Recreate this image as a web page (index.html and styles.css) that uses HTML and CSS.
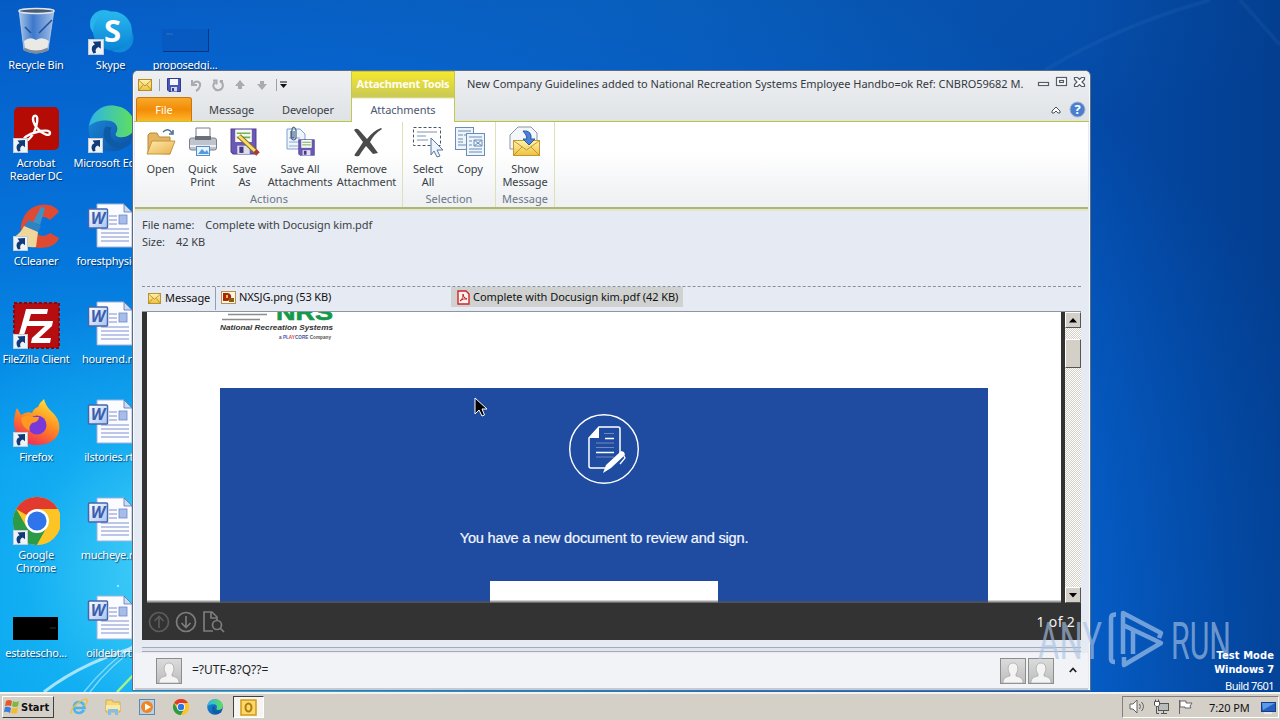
FILE: index.html
```html
<!DOCTYPE html>
<html lang="en">
<head>
<meta charset="utf-8">
<title>Desktop</title>
<link rel="stylesheet" href="styles.css">
</head>
<body>
<svg class="defs" width="0" height="0">
  <defs>
    <linearGradient id="gFolder" x1="0" y1="0" x2="1" y2="1"><stop offset="0" stop-color="#fdebae"/><stop offset="1" stop-color="#e9b14c"/></linearGradient>
    <linearGradient id="gMail" x1="0" y1="0" x2="0" y2="1"><stop offset="0" stop-color="#fff2b0"/><stop offset="1" stop-color="#edc23c"/></linearGradient>
    <linearGradient id="gSky" x1="0" y1="0" x2="0" y2="1"><stop offset="0" stop-color="#29b8ee"/><stop offset="1" stop-color="#0a84d6"/></linearGradient>
    <linearGradient id="gEdge" x1="0" y1="0" x2="1" y2="0"><stop offset="0" stop-color="#2db4e8"/><stop offset="1" stop-color="#5fe05a"/></linearGradient>
    <linearGradient id="gEdge2" x1="0" y1="0" x2="1" y2="1"><stop offset="0" stop-color="#1c8fdc"/><stop offset="1" stop-color="#0c4da0"/></linearGradient>
    <linearGradient id="gFox" x1=".8" y1="0" x2=".3" y2="1"><stop offset="0" stop-color="#ffe83c"/><stop offset=".5" stop-color="#ff8a20"/><stop offset="1" stop-color="#f02858"/></linearGradient>
    <linearGradient id="gPerson" x1="0" y1="0" x2="0" y2="1"><stop offset="0" stop-color="#dcdcdc"/><stop offset="1" stop-color="#bdbdbd"/></linearGradient>
    <linearGradient id="gGlass" x1="0" y1="0" x2="1" y2="0"><stop offset="0" stop-color="#a9c4e6"/><stop offset=".4" stop-color="#3d78cc"/><stop offset="1" stop-color="#a4bfe4"/></linearGradient>
    <linearGradient id="gWord" x1="0" y1="0" x2="1" y2="1"><stop offset="0" stop-color="#fff"/><stop offset="1" stop-color="#a9c3ef"/></linearGradient>
  </defs>
  <symbol id="shortcut" viewBox="0 0 15 15"><rect x=".5" y=".5" width="14" height="14" fill="#eef3f8" stroke="#c3ccd6"/><path d="M5 13.500C2.500 9.500 3.500 6 6.500 5.200L4.500 2.500 12 2 12 9.200 9.800 7.500C7.500 8.500 6.500 10 7.500 13Z" fill="#123a78"/></symbol>
  <symbol id="worddoc" viewBox="0 0 48 48"><path d="M10 1h27l8 8v35H10z" fill="#fbfcff" stroke="#9fb2da"/><path d="M37 1v8h8z" fill="#cddaf2" stroke="#5673b4" stroke-width=".8"/><path d="M22 13h8M22 17h8M22 21h8M14 26h28M14 30h28M14 34h28M14 38h28" stroke="#8090d0"/><rect x="32" y="12" width="8" height="9" fill="#a5bde8" stroke="#7088c8" stroke-width=".8"/><rect x="1.500" y="6" width="19" height="19" rx="1" fill="url(#gWord)" stroke="#4467b0" stroke-width="1.500"/><text x="11" y="21" text-anchor="middle" class="word-letter">W</text></symbol>
  <symbol id="chrome" viewBox="0 0 48 48"><circle cx="24" cy="24" r="24" fill="#fcc425"/><path d="M24 24 3.200 12A24 24 0 0 1 44.800 12Z" fill="#e23a2e"/><path d="M3.200 12A24 24 0 0 0 24 48L34 30 24 24 13 29Z" fill="#2c9a46"/><path d="M24 12h20.800A24 24 0 0 1 24 48L34 30Z" fill="#fcc425"/><circle cx="24" cy="24" r="12" fill="#fff"/><circle cx="24" cy="24" r="9.600" fill="#2f74ea"/></symbol>
  <symbol id="edge" viewBox="0 0 48 48"><circle cx="24" cy="24" r="23.500" fill="url(#gEdge2)"/><path d="M1 22C3 8 13 .5 24 .5c13 0 23.500 9 23.500 20C47.500 29 41 33 34 33c-5 0-7-2-5-5 3-5-1-12-8-12C12 15 4 18 1 22Z" fill="url(#gEdge)"/><path d="M18 22c-6 10 2 22 14 22 7 0 12-4 13-7-13 6-26-1-21-14Z" fill="#0d5ba8"/></symbol>
  <symbol id="mail" viewBox="0 0 14 12"><rect x=".5" y=".5" width="13" height="11" fill="url(#gMail)" stroke="#b58d22"/><path d="M1 1.500 7 7l6-5.500M1 11l4-5M13 11 9 6" fill="none" stroke="#b58d22" stroke-width=".9"/></symbol>
  <symbol id="floppy" viewBox="0 0 26 26"><path d="M1 1h24v24H3l-2-2z" fill="#6a58b4" stroke="#4c3d92"/><rect x="5" y="1.500" width="16" height="12" fill="#f6f8f4"/><path d="M6.500 5h13M6.500 9h13" stroke="#6db352" stroke-width="1.500"/><rect x="7" y="17" width="12" height="8" fill="#dcdfe9"/><rect x="9" y="18" width="4" height="6" fill="#463986"/></symbol>
  <symbol id="person" viewBox="0 0 26 26"><rect x=".5" y=".5" width="25" height="25" fill="url(#gPerson)" stroke="#8d8d8d"/><path d="M3 25c0-5 3-6 7-7v-2C7 12 7.500 5 13 5s6 7 3 11v2c4 1 7 2 7 7Z" fill="#f4f4f4" stroke="#a5a5a5" stroke-width=".7"/></symbol>
</svg>

<main class="desktop">
  <svg class="wallpaper" width="1280" height="692" viewBox="0 0 1280 692">
    <path d="M44 692Q85 660 150 643" stroke="#d5f5ff" stroke-opacity=".75" stroke-width="3" fill="none"/>
    <path d="M84 692Q105 665 140 640M90 692Q110 665 140 645" stroke="#d5f5ff" stroke-opacity=".55" stroke-width="1.500" fill="none"/>
    <path d="M117 692 140 668" stroke="#a9f08a" stroke-width="2.500"/>
    <path d="M1045 70Q1120 25 1210 0M1240 0 1280 45" stroke="#6ea8e0" stroke-opacity=".08" stroke-width="4" fill="none"/>
    <circle cx="118" cy="586" r="1" fill="#c5f2ff"/>
  </svg>

  <section class="icons">
    <div class="item"><svg class="art" viewBox="0 0 48 48"><path d="M7 3 12 43Q24 49 36 43L42 3Z" fill="url(#gGlass)" stroke="#b9cde4" stroke-width=".8"/><ellipse cx="24.500" cy="4" rx="17.500" ry="2.500" fill="#4a5a72" stroke="#dde5ee" stroke-width="1.500"/><path d="M12 34q6-5 12-1 6-4 13 1l-2 9q-11 4-22 0z" fill="#e9e9e6"/><path d="m13 20 6 6m8 0 13-13" stroke="#1c51a0" stroke-width="1.500"/><path d="M12 42q12 6 24 0" stroke="#7e8b99" stroke-width="3" fill="none"/></svg><span class="label">Recycle Bin</span></div>
    <div class="item"><svg class="art" viewBox="0 0 48 48"><circle cx="17" cy="17" r="14" fill="#27b4ec"/><circle cx="32" cy="31" r="14.500" fill="#118cda"/><circle cx="25.500" cy="24" r="19.500" fill="url(#gSky)"/><text x="25.500" y="35" text-anchor="middle" class="skype-letter">S</text><use href="#shortcut" x="1" y="32" width="16" height="16"/></svg><span class="label">Skype</span></div>
    <div class="item"><svg class="art" viewBox="0 0 48 48"><rect x="1" y="22" width="46" height="22" fill="#0a4cae" fill-opacity=".35"/><path d="M2 44.500h45.500V22" stroke="#053484" fill="none"/><path d="M5 27h7" stroke="#3970bd"/></svg><span class="label">proposedgi...</span></div>
    <div class="item"><svg class="art" viewBox="0 0 48 48"><rect x="2" y="2" width="45" height="43" rx="5" fill="#b40c04"/><path d="M22 11c4-2 4 5 2 11-2 7-7 14-11 14-4-2 3-7 12-9 6-2 13-2 13 1 0 4-8 1-12-4-5-5-6-11-4-13Z" fill="none" stroke="#fff" stroke-width="2.400"/><use href="#shortcut" x="1" y="33" width="15" height="15"/></svg><span class="label">Acrobat<br>Reader DC</span></div>
    <div class="item"><svg class="art" viewBox="0 0 48 48"><use href="#edge" x="1" y="0" width="47" height="47"/><use href="#shortcut" x="1" y="33" width="15" height="15"/></svg><span class="label">Microsoft Edge</span></div>
    <div class="item"></div>
    <div class="item"><svg class="art" viewBox="0 0 48 48"><path d="M47 9C42-1 22-2 13 12 3 28 12 45 27 45c12 0 18-4 20-10l-9-5c-9 7-17 0-14-9 2-8 9-9 14-4Z" fill="#df4b32"/><path d="m29 4 4 1-5 17-7-3Z" fill="#3e92c8"/><path d="m17 17 12 6-3 6-14-6Z" fill="#2c84c4"/><path d="m12 23 14 6-2 15Q10 46 2 34q7-4 10-11Z" fill="#efd69a"/><use href="#shortcut" x="1" y="33" width="15" height="15"/></svg><span class="label">CCleaner</span></div>
    <div class="item"><svg class="art"><use href="#worddoc" x="0" y="0" width="48" height="48"/></svg><span class="label">forestphysic...</span></div>
    <div class="item"></div>
    <div class="item"><svg class="art" viewBox="0 0 48 48"><rect x="2" y="2" width="45" height="45" fill="#b60d10" stroke="#8f0608" stroke-width="2" stroke-dasharray="3 2"/><path d="M14 8h22l-1 5H19l-2 7h12l-1 5H15l-4 12H6L13 12Z" fill="#fff"/><path d="M23 20h18l-1 5-13 12h12l-1 5H19l1-5 13-12H22Z" fill="#fff"/><use href="#shortcut" x="1" y="33" width="15" height="15"/></svg><span class="label">FileZilla Client</span></div>
    <div class="item"><svg class="art"><use href="#worddoc" x="0" y="0" width="48" height="48"/></svg><span class="label">hourend.rtf</span></div>
    <div class="item"></div>
    <div class="item"><svg class="art" viewBox="0 0 48 48"><path d="M5 9 9 16q6-4 11-2 2-5 6-6 2-5 6-8 2 8 8 13 9 8 7 19C45 42 35 46 25 46 10 46 1 36 2 21Q3 13 5 9Z" fill="url(#gFox)"/><circle cx="25" cy="26" r="9.500" fill="#7a38d8"/><path d="M9 19q6-4 12-1h6q0 5-7 6-4 4-2 8-8-3-9-13Z" fill="#ff9820"/><use href="#shortcut" x="1" y="33" width="15" height="15"/></svg><span class="label">Firefox</span></div>
    <div class="item"><svg class="art"><use href="#worddoc" x="0" y="0" width="48" height="48"/></svg><span class="label">ilstories.rtf</span></div>
    <div class="item"></div>
    <div class="item"><svg class="art" viewBox="0 0 48 48"><use href="#chrome" x="1" y="0" width="48" height="48"/><use href="#shortcut" x="1" y="33" width="15" height="15"/></svg><span class="label">Google<br>Chrome</span></div>
    <div class="item"><svg class="art"><use href="#worddoc" x="0" y="0" width="48" height="48"/></svg><span class="label">mucheye.rtf</span></div>
    <div class="item"></div>
    <div class="item"><svg class="art" viewBox="0 0 48 48"><rect x="1" y="22" width="45" height="23" fill="#000"/><path d="M38 33h6" stroke="#333"/></svg><span class="label">estatescho...</span></div>
    <div class="item"><svg class="art"><use href="#worddoc" x="0" y="0" width="48" height="48"/></svg><span class="label">oildebt.rtf</span></div>
  </section>

  <section class="window">
    <header class="head">
      <div class="head-left">
        <div class="qat">
          <svg width="14" height="12"><use href="#mail" width="14" height="12"/></svg><i class="sep"></i>
          <svg width="14" height="14"><path d="M.5.5h13v13H2L.5 12Z" fill="#4958b8" stroke="#303c90"/><rect x="3" y="1" width="8" height="6" fill="#f4f6fb"/><rect x="4" y="9" width="6" height="4.500" fill="#cfd6ea"/><rect x="5" y="10" width="2" height="3" fill="#303c90"/></svg>
          <svg width="14" height="14" fill="none" stroke="#a9abae" stroke-width="2"><path d="M3 2v5h5M3 7c4-6 9-3 8 1-.5 2-2 4-4 5"/></svg>
          <svg width="14" height="14" fill="none" stroke="#a9abae" stroke-width="2"><path d="M2 2.500h3.500v4M4 4c-4 4 0 9 4 8 5-1 5-7 1-9h3"/></svg>
          <svg width="14" height="14" fill="#a9abae"><path d="m7 2 5 6H9v3H5V8H2Z"/></svg>
          <svg width="14" height="14" fill="#a9abae"><path d="m7 12 5-6H9V3H5v3H2Z"/></svg><i class="sep"></i>
          <svg class="more" width="8" height="8"><path d="M0 1h7" stroke="#111"/><path d="M0 3h7L3.500 7Z" fill="#111"/></svg>
        </div>
        <nav class="tabs"><span class="tab-file">File</span><span class="tab t-msg">Message</span><span class="tab t-dev">Developer</span></nav>
      </div>
      <div class="context"><b>Attachment Tools</b><span>Attachments</span></div>
      <div class="head-right">
        <div class="title-row"><span class="title">New Company Guidelines added to National Recreation Systems Employee Handbo=ok Ref: CNBRO59682 M.</span>
          <svg class="controls" width="50" height="14" fill="#fff" stroke="#555d68" stroke-width="1.200"><rect x="2.500" y="6.500" width="10" height="3"/><rect x="20.500" y="1.500" width="10" height="8"/><rect x="23.500" y="4.500" width="4" height="2"/><path d="M38.500 1.500h3l2 2 2-2h3v2l-2.500 2.500 2.500 2.500v2h-3l-2-2-2 2h-3v-2L41 6l-2.500-2.500Z"/></svg></div>
        <div class="help-row"><svg width="10" height="8"><path d="M1 5 5 1l4 4v2H7L5 5 3 7H1Z" fill="#fff" stroke="#4c5560"/></svg><svg width="17" height="17"><circle cx="8.500" cy="8.500" r="7.500" fill="#4a7fd0" stroke="#a2b4d2"/><text x="8.500" y="13" text-anchor="middle" class="help-mark">?</text></svg></div>
      </div>
    </header>

    <div class="ribbon">
      <div class="group g-actions">
        <div class="btns">
          <div class="btn b-open"><svg viewBox="0 0 32 32"><path d="M3 9V27l22 1V11H14l-2-4H5Z" fill="#e5b45e" stroke="#b98a3d"/><path d="m2 28 5-13h23l-5 13Z" fill="url(#gFolder)" stroke="#c7953f"/><path d="M18 6q5-5 9 1m1-3v4h-4" fill="none" stroke="#4c7396" stroke-width="1.600"/></svg><span>Open</span></div>
          <div class="btn b-print"><svg viewBox="0 0 32 32"><path d="M9 2h14v12H9z" fill="#fff" stroke="#777c88"/><rect x="2.500" y="12" width="27" height="12" rx="2" fill="#bfc3cb" stroke="#7b808b"/><path d="M8 10h16v4H8Z" fill="#6b7078"/><path d="M3 20h26" stroke="#eceef1" stroke-width="2"/><rect x="9.500" y="20.500" width="13" height="9" fill="#e8f3ff" stroke="#4f8bcf"/><path d="m11 28 4-5 3 3 2-2 2 4z" fill="#4f9ae0"/></svg><span>Quick<br>Print</span></div>
          <div class="btn b-save"><svg viewBox="0 0 32 32"><use href="#floppy" x="1" y="2" width="27" height="27"/><path d="m10 10 17 16" stroke="#8d6a1a" stroke-width="5"/><path d="m10 10 16 15" stroke="#f6df6e" stroke-width="3"/><path d="m26 25 3 3" stroke="#a83c35" stroke-width="5"/></svg><span>Save<br>As</span></div>
          <div class="btn b-all"><svg viewBox="0 0 32 32"><path d="M3 3h13l5 5v15H3Z" fill="#eef4fc" stroke="#7f9fce"/><path d="M5 12h11m-11 4h11m-11 4h9" stroke="#8eabd6"/><path d="M7 5v7q3 4 5 0V4q-2-5-4-1v8q1 2 2 0V5" fill="none" stroke="#4a6486" stroke-width="1.200"/><use href="#floppy" x="14" y="13" width="17" height="17"/></svg><span>Save All<br>Attachments</span></div>
          <div class="btn b-remove"><svg viewBox="0 0 32 32"><path d="M3 4q3-3 6 1l7 8Q22 5 30 2l1 1Q23 8 19 16l8 11-5 1-7-8q-4 5-7 10-6 1-4-2 5-7 8-12Z" fill="#4b4b4b"/></svg><span>Remove<br>Attachment</span></div>
        </div><div class="caption">Actions</div>
      </div>
      <div class="group g-selection">
        <div class="btns">
          <div class="btn b-select"><svg viewBox="0 0 32 32"><rect x="1.500" y="1.500" width="27" height="18" fill="#fff" stroke="#4d5563" stroke-dasharray="3 2"/><path d="M5 6h20M5 10h9m-9 4h11" stroke="#7d94b4"/><path d="m19 12 12 12h-6l3 6-3 1-3-6-3 4Z" fill="#eef4fb" stroke="#59779b"/></svg><span>Select<br>All</span></div>
          <div class="btn b-copy"><svg viewBox="0 0 32 32" fill="#edf4fc" stroke="#6b8db4"><rect x="1.500" y="1.500" width="18" height="22"/><path d="M4 5h13M4 9h5m-5 4h5m-5 3h5m-5 3h9M10 9h7v6"/><rect x="12.500" y="7.500" width="18" height="22"/><path d="M15 11h13M15 15h3m-3 4h3m-3 4h13m-13 3h13M20 14h8v6h-8zl8 6m0-6-8 6"/></svg><span>Copy</span></div>
        </div><div class="caption">Selection</div>
      </div>
      <div class="group g-message">
        <div class="btns"><div class="btn b-show"><svg viewBox="0 0 32 32"><path d="M1 9 9 1h13l6 6v16H1Z" fill="#f3f6fa" stroke="#8c97a6"/><rect x="4.500" y="14.500" width="26" height="15" fill="url(#gMail)" stroke="#c7962f"/><path d="m5 15 12.500 9L30 15M5 29l8-8m17 8-8-8" fill="none" stroke="#c7962f"/><path d="M14 5q9-1 8 8h4l-6 6-6-6h4q0-4-4-8Z" fill="#4b82d8" stroke="#2a59a4"/></svg><span>Show<br>Message</span></div></div><div class="caption">Message</div>
      </div>
    </div>

    <div class="info"><div><span>File name:</span><span class="fname">Complete with Docusign kim.pdf</span></div><div><span>Size:</span><span class="size">42 KB</span></div></div>

    <div class="attachments">
      <div class="att a-msg"><svg width="13" height="11"><use href="#mail" width="13" height="11"/></svg><span>Message</span></div>
      <div class="att a-png"><svg width="15" height="13"><rect x=".5" y=".5" width="14" height="12" fill="#fff6dc" stroke="#b5905a"/><path d="M2 2h5q4 1 3 5l-3 3H2Z" fill="#a8280c"/><rect x="8" y="7" width="5" height="4" fill="#8e5a12"/><path d="M5 4h2v3H5z" fill="#ffb848"/></svg><span>NXSJG.png (53 KB)</span></div>
      <div class="att a-pdf"><svg width="13" height="15"><path d="M1 1h8l3 3v10H1Z" fill="#fff3f1" stroke="#cf2626" stroke-width="1.400"/><path d="M6 4q1 4-3 7 3-3 7-2-4-1-4-5" fill="none" stroke="#c32424"/></svg><span>Complete with Docusign kim.pdf (42 KB)</span></div>
    </div>

    <div class="viewer">
      <div class="stage">
        <div class="page">
          <svg class="logo" width="116" height="30"><path d="M8 2.500h39M2 7.500h38" stroke="#8c8c8c" stroke-width="1.500"/><text x="56" y="8" textLength="57" lengthAdjust="spacingAndGlyphs" class="nrs">NRS</text><text x="0" y="17.500" textLength="113" lengthAdjust="spacingAndGlyphs" class="nrs-name">National Recreation Systems</text><text x="59" y="27" textLength="52" lengthAdjust="spacingAndGlyphs" class="nrs-sub">a <tspan fill="#4c62c8">PL</tspan><tspan fill="#d24a42">AY</tspan><tspan fill="#4059a0">CORE</tspan> Company</text></svg>
          <div class="banner">
            <svg class="sign" width="72" height="72" viewBox="0 0 72 72"><circle cx="36" cy="36" r="34.300" fill="none" stroke="#fff" stroke-width="1.400"/><path d="M52 40V16q0-2-2-2H31L21 25v28q0 2 2 2h15" fill="none" stroke="#fff" stroke-width="1.500"/><path d="M31 14v11H21Z" fill="#fff"/><path d="M36 20.500h10M28 30h18M28 34.500h18M28 44h18" stroke="#7187bf"/><path d="M37 25.500h9M28 39.500h18" stroke="#fff" stroke-width="1.300"/><path d="m35 60 3-8L51 40l2-2 3 1 1 3-14 13Z" fill="#fff"/><path d="m56 43 1 2-5 6" fill="none" stroke="#fff" stroke-width="1.300"/></svg>
            <p>You have a new document to review and sign.</p>
            <div class="cta"></div>
          </div>
          <div class="page-shade"></div>
        </div>
        <div class="scroll"><div class="sb-btn"><svg width="8" height="5"><path d="M0 4.500h8L4 0Z"/></svg></div><div class="thumb"></div><div class="sb-btn sb-down"><svg width="8" height="5"><path d="M0 0h8L4 4.500Z"/></svg></div></div>
      </div>
      <div class="pagebar">
        <svg width="78" height="24" fill="none" stroke="#7d7d7d" stroke-width="1.700"><g stroke="#5c5c5c"><circle cx="11" cy="12" r="9.500"/><path d="M11 18V7M6.500 11 11 6.500l4.500 4.500"/></g><circle cx="38" cy="12" r="9.500"/><path d="M38 6v11M33.500 13l4.500 4.500 4.500-4.500"/><path d="M65 21h-9V2h8l5 5v3M63 2v6h6"/><circle cx="69" cy="15" r="4.500"/><path d="m72 18 4 4"/></svg>
        <span>1 of 2</span>
      </div>
    </div>

    <div class="splitter"></div>
    <footer class="people"><svg width="26" height="26"><use href="#person" width="26" height="26"/></svg><span class="who">=?UTF-8?Q??=</span><svg width="26" height="26"><use href="#person" width="26" height="26"/></svg><svg class="p3" width="26" height="26"><use href="#person" width="26" height="26"/></svg><svg class="caret" width="8" height="6"><path d="m.8 5 3.200-3.500L7.200 5" fill="none" stroke="#222" stroke-width="1.800"/></svg></footer>
  </section>

  <svg class="watermark" width="200" height="70" viewBox="0 0 200 70"><g class="mark"><text x="2" y="51" textLength="64" lengthAdjust="spacingAndGlyphs">ANY</text><text x="135" y="51" textLength="60" lengthAdjust="spacingAndGlyphs">RUN</text></g><g fill="none" stroke="#9fc0e8" stroke-opacity=".7" stroke-width="4.500" stroke-linejoin="round"><path d="M80 6.500H79q-4 0-4 4V51q0 3 4 3M87 46V5l38 20-2 5M87 17l38 18-37 22v-8M97 22v24"/></g></svg>
  <div class="build"><b>Test Mode</b><b>Windows 7</b><span>Build 7601</span></div>

  <svg class="cursor" width="13" height="20"><path d="M1 1v16l4-4 3 6 2.500-1L8 12h5Z" fill="#000" stroke="#fff"/></svg>
</main>

<footer class="taskbar">
  <div class="start"><svg width="16" height="16"><path d="M2 2q3-2 6 0L7 7Q4 6 1 7Z" fill="#e8562a"/><path d="M9 2q3 2 6 0l-1 5q-3 2-6 0Z" fill="#7cb93c"/><path d="M1 8q3-1 6 1l-1 5q-3-2-6-1Z" fill="#3c7edc"/><path d="M8 9q3 1 6-1l-1 6q-3 1-6 0Z" fill="#f5bb2c"/></svg><b>Start</b></div>
  <div class="quick">
    <svg viewBox="0 0 18 18"><path d="M14 12q-2 3-5 3-5 0-5-5.500T9 4q5 0 5.500 6H4" fill="none" stroke="#4db4ec" stroke-width="2.600"/><path d="M1 16Q0 11 8 5t9-3q1 3-3 6" fill="none" stroke="#ecc13b" stroke-width="1.300"/></svg>
    <svg viewBox="0 0 18 18"><path d="M2 2h6l1 2h7v10H2Z" fill="#f4d779" stroke="#d5ac48"/><path d="M2 7h14v5H2z" fill="#fbe9a6"/><path d="M4 17v-6h10v6h-3v-3H7v3Z" fill="#83bfe6"/></svg>
    <svg viewBox="0 0 18 18"><rect x="1.500" y="1.500" width="15" height="15" fill="#b8d2ec" stroke="#5d88b4"/><circle cx="9" cy="9" r="6" fill="#f0861f"/><path d="m7 5.500 6 3.500-6 3.500Z" fill="#fff"/></svg>
    <svg viewBox="0 0 18 18"><use href="#chrome" x="1" y="1" width="16" height="16"/></svg>
    <svg viewBox="0 0 18 18"><use href="#edge" x="1" y="1" width="16" height="16"/></svg>
  </div>
  <div class="active"><svg width="17" height="17"><rect x="1" y="1" width="15" height="15" fill="#fbd772" stroke="#d39a13" stroke-width="1.500"/><ellipse cx="8.500" cy="8.500" rx="3" ry="4" fill="none" stroke="#b27b04" stroke-width="2"/></svg></div>
  <div class="tray">
    <svg width="17" height="16" fill="#fff" stroke="#626262"><path d="M1 5h3l4-4v13l-4-4H1Z"/><path d="M10.500 5q2 2.500 0 5M12.500 3q4 4.500 0 9" fill="none"/></svg>
    <svg width="17" height="16" fill="#fff" stroke="#555"><rect x="5.500" y="4.500" width="10" height="7" fill="#b9bbbd"/><path d="M8 14.500h6M10.500 12v2M3.500 7v7.500H6" fill="none"/><path d="M1.500 2.500h5V6l-1.500 1.500h-2L1.500 6ZM2.500.5v2M5.500.5v2"/></svg>
    <svg width="17" height="16" fill="#fff" stroke="#666"><path d="M2.500 15V1M3 2h6v2h6l-2 3 1 2H8V8H3Z"/></svg>
    <span>7:20 PM</span>
    <svg width="15" height="13"><rect x=".5" y="1.500" width="14" height="9" fill="#245fc0" stroke="#143f86"/><path d="M1 2h13L2 9Z" fill="#5c9ae6"/><path d="M3 12h8" stroke="#fff"/></svg>
  </div>
</footer>
</body>
</html>
```
FILE: styles.css
```css
* { box-sizing: border-box; }
body { margin: 0; width: 1280px; height: 720px; overflow: hidden; display: flex; flex-direction: column; font: 11px/13px "Noto Sans", sans-serif; color: #3b3f46; }
svg { flex: none; display: block; }
.defs { position: absolute; }
.desktop { position: relative; height: 692px; flex: none; overflow: hidden;
  background:
    radial-gradient(ellipse 300px 280px at 190px 570px, rgba(90,222,250,.85), rgba(40,190,245,.35) 55%, transparent),
    linear-gradient(90deg, transparent 84%, rgba(0,30,80,.28) 100%),
    radial-gradient(ellipse 700px 160px at 640px 0, rgba(20,120,200,.3), transparent),
    radial-gradient(ellipse 1300px 820px at 110px 640px, #08aaf2, #06a0f0 22%, #0577dc 46%, #0560cc 72%, #044aa8 100%); }
.wallpaper { position: absolute; inset: 0; }

.icons { position: relative; display: grid; grid-template-columns: 72px 77px 72px; grid-auto-rows: 98px; padding-top: 7px; width: 221px; }
.item { display: flex; flex-direction: column; align-items: center; color: #fff; }
.art { width: 48px; height: 48px; }
.label { margin-top: 3px; white-space: nowrap; text-align: center; font: 11px/13px "Noto Sans", sans-serif; letter-spacing: -.24px; text-shadow: 1px 1px 1px rgba(0,20,60,.7); }
.word-letter { font: italic bold 16px "Open Sans", sans-serif; fill: #3b5fb0; }
.skype-letter { font: bold 31px "Open Sans", sans-serif; fill: #fff; }
.build { position: absolute; right: 6px; top: 649px; display: flex; flex-direction: column; align-items: flex-end; color: #fff; font: 11px/14px "DejaVu Sans Condensed", "DejaVu Sans", sans-serif; letter-spacing: -.1px; }
.build b:first-child { letter-spacing: .1px; }
.build span { font: 11px/17px "Noto Sans", sans-serif; letter-spacing: -.55px; }

.window { position: absolute; left: 132px; top: 70px; width: 959px; height: 621px; border: 1px solid #5b6c86; border-radius: 6px 6px 0 0; background: #e6eaf2; display: flex; flex-direction: column; padding: 0 2px; box-shadow: inset 1px 1px #f8fafc, inset -1px -1px #f8fafc; overflow: hidden; }
.head { height: 51px; flex: none; display: flex; margin: 0 -1px; background: linear-gradient(#eef0f2, #dfe2e6); }
.head-left { width: 217px; border-bottom: 1px solid #b9c437; display: flex; flex-direction: column; }
.qat { height: 27px; display: flex; align-items: center; padding: 2px 0 0 4px; gap: 8px; }
.qat .sep { width: 1px; height: 12px; background: #9a9fa8; margin: 0 -1px; }
.qat .more { margin-left: -4px; }
.tabs { display: flex; height: 24px; line-height: 25px; font-size: 11px; }
.tab-file { width: 56px; margin-left: 2px; line-height: 24px; background: linear-gradient(#f8a92c, #f28c05 50%, #ffb52b); border: 1px solid #c9760b; border-bottom: 0; border-radius: 3px 3px 0 0; color: #fff; text-align: center; }
.tab { letter-spacing: -.1px; }
.t-msg { margin-left: 17px; width: 73px; }
.context { width: 104px; border: solid #c3c94a; border-width: 1px 1px 0; text-align: center; background: linear-gradient(#f4e72e, #c9c955 25px, #fff 27px); }
.context b { display: block; height: 27px; font-size: 11px; line-height: 23px; letter-spacing: -.25px; color: #fffef0; white-space: nowrap; }
.context span { display: block; line-height: 22px; color: #4b586f; letter-spacing: -.05px; }
.head-right { flex: 1; border-bottom: 1px solid #b9c437; padding: 5px 3px 0 12px; }
.title-row { display: flex; justify-content: space-between; height: 25px; line-height: 15px; }
.title { width: 560px; white-space: nowrap; color: #343942; letter-spacing: -.025px; }
.help-row { display: flex; justify-content: flex-end; align-items: center; gap: 8px; }
.help-mark { font: bold 13px "Open Sans", sans-serif; fill: #fff; }

.ribbon { height: 87px; flex: none; display: flex; background: linear-gradient(#fff 35%, #eff1f3 92%); border-bottom: 2px solid #aeb57a; padding-left: 1px; }
.group { border-right: 1px solid #dfe0b8; display: flex; flex-direction: column; height: 85px; }
.g-actions { width: 267px; }
.g-selection { width: 93px; }
.g-message { width: 59px; }
.btns { display: flex; height: 70px; padding-top: 4px; }
.btn { display: flex; flex-direction: column; align-items: center; text-align: center; white-space: nowrap; letter-spacing: -.1px; }
.btn svg { width: 32px; height: 32px; margin-bottom: 4px; }
.b-open { width: 49px; }
.b-print { width: 35px; }
.b-save { width: 49px; }
.b-all { width: 62px; }
.b-remove { width: 71px; }
.b-select { width: 50px; }
.b-copy { width: 34px; }
.b-show { width: 59px; }
.caption { text-align: center; color: #6b7687; letter-spacing: 0; }

.info { height: 77px; flex: none; padding: 7px 0 0 7px; line-height: 17px; box-shadow: inset 0 2px #e4e7c5; }
.info div { display: flex; letter-spacing: -.05px; }
.fname { margin-left: 11px; }
.size { margin-left: 11px; }
.attachments { height: 25px; flex: none; margin: 0 7px; border-top: 1px dashed #8b909a; display: flex; color: #111; line-height: 17px; }
.att { display: flex; align-items: center; height: 20px; white-space: nowrap; letter-spacing: -.1px; }
.att span { position: relative; top: -1px; }
.a-msg { width: 74px; height: 23px; border-right: 1px solid #8aa0bc; padding-left: 6px; gap: 4px; }
.a-png { width: 235px; padding-left: 5px; gap: 3px; }
.a-pdf { width: 232px; background: #cfd2d1; padding-left: 6px; gap: 3px; letter-spacing: -.05px; }

.viewer { width: 939px; height: 329px; flex: none; margin-left: 7px; border-top: 1px solid #90969f; background: #333; display: flex; flex-direction: column; }
.stage { display: flex; height: 291px; padding-left: 5px; }
.page { position: relative; width: 914px; background: #fff; margin-right: 4px; overflow: hidden; }
.logo { margin-left: 73px; }
.nrs { font: bold 22px "Liberation Sans", sans-serif; fill: #14994c; stroke: #14994c; stroke-width: .6px; }
.nrs-name { font: italic bold 8px "Liberation Sans", sans-serif; fill: #333; }
.nrs-sub { font: bold 5px "Liberation Sans", sans-serif; fill: #555; }
.banner { width: 768px; height: 215px; margin: 46px 0 0 73px; background: #1f4ca1; display: flex; flex-direction: column; align-items: center; padding-top: 25px; color: #f4f7ff; }
.banner p { margin: 43px 0 0; font: 14.600px/20px "Liberation Sans", sans-serif; letter-spacing: -.2px; white-space: nowrap; -webkit-text-stroke: .2px #f4f7ff; }
.cta { margin-top: 33px; width: 228px; height: 30px; background: #fff; }
.page-shade { position: absolute; left: 0; right: 0; bottom: 0; height: 3px; background: linear-gradient(rgba(60,60,60,.1), #555); }
.scroll { width: 16px; display: flex; flex-direction: column; background: repeating-conic-gradient(#fff 0 25%, #d4d0c8 0 50%) 0 0 / 2px 2px; }
.sb-btn, .thumb { background: #d4d0c8; border: 1px solid; border-color: #fff #555 #555 #fff; flex: none; }
.sb-btn { height: 16px; display: flex; align-items: center; justify-content: center; }
.thumb { height: 29px; margin-top: 11px; }
.sb-down { margin-top: auto; }
.pagebar { height: 37px; display: flex; justify-content: space-between; align-items: center; padding: 0 6px 0 6px; color: #f2f2f2; font-size: 14px; }
.pagebar span { letter-spacing: .3px; }

.splitter { height: 5px; flex: none; margin: 7px 7px 0; border: solid #a5abb8; border-width: 1px 0; background: #dfe4ed; }
.people { flex: 1; margin-top: 1px; background: #f1f3f7; border-bottom: 2px solid #c5cad2; display: flex; align-items: center; padding-left: 21px; color: #222; font-size: 12px; }
.who { margin: 0 auto 2px 10px; }
.p3 { margin-left: 2px; }
.caret { margin: 0 11px 2px 15px; }
.watermark { position: absolute; left: 1036px; top: 608px; }
.mark { font: 400 52px Roboto, sans-serif; fill: #a9c3e4; fill-opacity: .65; }
.cursor { position: absolute; left: 474px; top: 397px; }

.taskbar { height: 28px; background: #d4d0c8; border-top: 2px solid #f5f3ef; display: flex; align-items: center; color: #111; position: relative; }
.start { width: 52px; height: 22px; margin-left: 2px; border: 1px solid; border-color: #fff #404040 #404040 #fff; display: flex; align-items: center; gap: 1px; padding-left: 1px; font: 11px "DejaVu Sans Condensed", "DejaVu Sans", sans-serif; }
.quick { display: flex; gap: 16px; margin-left: 16px; }
.quick svg { width: 18px; height: 18px; }
.active { width: 31px; height: 22px; margin-left: 9px; border: 1px solid; border-color: #404040 #fff #fff #404040; background: #f7f5f1; display: flex; align-items: center; justify-content: center; }
.tray { width: 157px; height: 22px; margin: 0 1px 0 auto; border: 1px solid; border-color: #808080 #fff #fff #808080; display: flex; align-items: center; padding-left: 6px; gap: 7px; font-size: 11px; }
.tray span { margin: 0 4px 0 8px; white-space: nowrap; letter-spacing: -.1px; }
```
